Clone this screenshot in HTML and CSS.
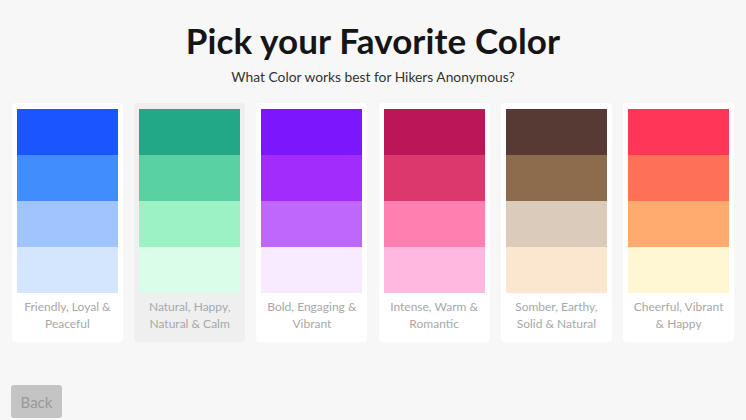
FILE: index.html
```html
<!DOCTYPE html>
<html lang="en">
<head>
<meta charset="utf-8">
<title>Pick your Favorite Color</title>
<link rel="stylesheet" href="styles.css">
</head>
<body>
<main class="page">
  <h1 class="title">Pick your Favorite Color</h1>
  <p class="subtitle">What Color works best for Hikers Anonymous?</p>
  <div class="cards">
    <div class="card">
      <div class="palette">
        <div class="sw blue1"></div><div class="sw blue2"></div><div class="sw blue3"></div><div class="sw blue4"></div>
      </div>
      <p class="caption">Friendly, Loyal &amp; Peaceful</p>
    </div>
    <div class="card selected">
      <div class="palette">
        <div class="sw green1"></div><div class="sw green2"></div><div class="sw green3"></div><div class="sw green4"></div>
      </div>
      <p class="caption">Natural, Happy, Natural &amp; Calm</p>
    </div>
    <div class="card">
      <div class="palette">
        <div class="sw purple1"></div><div class="sw purple2"></div><div class="sw purple3"></div><div class="sw purple4"></div>
      </div>
      <p class="caption">Bold, Engaging &amp; Vibrant</p>
    </div>
    <div class="card">
      <div class="palette">
        <div class="sw pink1"></div><div class="sw pink2"></div><div class="sw pink3"></div><div class="sw pink4"></div>
      </div>
      <p class="caption">Intense, Warm &amp; Romantic</p>
    </div>
    <div class="card">
      <div class="palette">
        <div class="sw brown1"></div><div class="sw brown2"></div><div class="sw brown3"></div><div class="sw brown4"></div>
      </div>
      <p class="caption">Somber, Earthy, Solid &amp; Natural</p>
    </div>
    <div class="card">
      <div class="palette">
        <div class="sw warm1"></div><div class="sw warm2"></div><div class="sw warm3"></div><div class="sw warm4"></div>
      </div>
      <p class="caption">Cheerful, Vibrant &amp; Happy</p>
    </div>
  </div>
  <div class="footer">
    <button class="back">Back</button>
  </div>
</main>
</body>
</html>
```
FILE: styles.css
```css
* { box-sizing: border-box; }
html, body {
  margin: 0;
  padding: 0;
  background: #f7f7f7;
  font-family: Lato, "Noto Sans", sans-serif;
}
.page {
  width: 746px;
  height: 420px;
  display: flex;
  flex-direction: column;
  align-items: center;
}
.title {
  margin: 18px 0 0;
  font-size: 35px;
  line-height: 44px;
  font-weight: 700;
  color: #151515;
  letter-spacing: 0.1px;
}
.subtitle {
  margin: 6px 0 0;
  font-size: 13.8px;
  line-height: 18px;
  color: #333;
}
.cards {
  margin-top: 17px;
  display: flex;
  gap: 11.4px;
  width: 722px;
}
.card {
  width: 111px;
  height: 239px;
  background: #ffffff;
  border-radius: 4px;
  padding: 6px 5px 0;
}
.card.selected { background: #efefef; }
.palette { display: flex; flex-direction: column; }
.sw { height: 46px; }
.caption {
  margin: 6px 0 0;
  font-size: 12px;
  line-height: 16.5px;
  color: #a8a8a8;
  text-align: center;
}
.footer {
  align-self: stretch;
  margin-top: auto;
  padding: 0 0 2px 11px;
}
.back {
  width: 51px;
  height: 33px;
  border: none;
  border-radius: 3px;
  background: #c4c4c4;
  color: #999;
  font-family: inherit;
  font-size: 15px;
  padding: 0;
}
.blue1 { background: #1b55fd; }
.blue2 { background: #428dfd; }
.blue3 { background: #9fc4fe; }
.blue4 { background: #d4e5fe; }
.green1 { background: #22a886; }
.green2 { background: #5ad1a3; }
.green3 { background: #9cf2c5; }
.green4 { background: #d9fde9; }
.purple1 { background: #7a17fc; }
.purple2 { background: #a12cfc; }
.purple3 { background: #bf66fc; }
.purple4 { background: #f8eaff; }
.pink1 { background: #b91755; }
.pink2 { background: #dc386d; }
.pink3 { background: #fe7fb0; }
.pink4 { background: #ffb9e0; }
.brown1 { background: #573a33; }
.brown2 { background: #8d6c4e; }
.brown3 { background: #dbcbbb; }
.brown4 { background: #fbe6cf; }
.warm1 { background: #ff3657; }
.warm2 { background: #ff7058; }
.warm3 { background: #ffaa6f; }
.warm4 { background: #fff6d4; }
```
